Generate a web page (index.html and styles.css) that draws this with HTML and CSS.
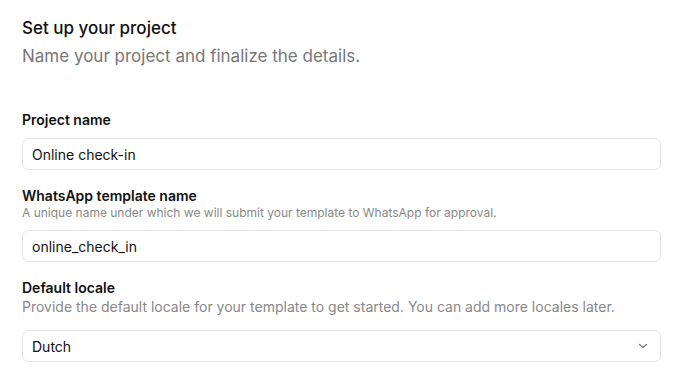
FILE: index.html
```html
<!DOCTYPE html>
<html lang="en">
<head>
  <meta charset="UTF-8">
  <title>Set up your project</title>
  <link rel="stylesheet" href="styles.css">
</head>
<body>
  <div class="page">
    <div class="intro">
      <h1 class="title">Set up your project</h1>
      <p class="subtitle">Name your project and finalize the details.</p>
    </div>

    <form class="form">
      <div class="field">
        <label class="label" for="projectName">Project name</label>
        <input class="input" id="projectName" value="Online check-in" />
      </div>

      <div class="field">
        <label class="label" for="templateName">WhatsApp template name</label>
        <div class="hint hint-small">A unique name under which we will submit your template to WhatsApp for approval.</div>
        <input class="input" id="templateName" value="online_check_in" />
      </div>

      <div class="field">
        <label class="label" for="locale">Default locale</label>
        <div class="hint">Provide the default locale for your template to get started. You can add more locales later.</div>
        <div class="select" id="locale">
          <span>Dutch</span>
          <svg class="chevron" width="10" height="10" viewBox="0 0 10 10">
            <path d="M1.5 3.5 L5 6.5 L8.5 3.5" fill="none" stroke="#777" stroke-width="1.2" stroke-linecap="round" stroke-linejoin="round"/>
          </svg>
        </div>
      </div>
    </form>
  </div>
</body>
</html>
```

FILE: styles.css
```css
body {
  margin: 0;
  padding: 0;
  background: #fff;
  color: #111;
  font-family: Inter, "Liberation Sans", sans-serif;
}
.page {
  padding: 16px 22px;
}
.title {
  margin: 0;
  font-size: 17px;
  line-height: 24px;
  font-weight: 500;
  color: #111;
}
.subtitle {
  margin: 4px 0 0;
  font-size: 17px;
  line-height: 24px;
  color: #777;
}
.form {
  margin-top: 42px;
  display: flex;
  flex-direction: column;
  gap: 16px;
}
.field {
  display: flex;
  flex-direction: column;
}
.label {
  font-size: 14px;
  line-height: 20px;
  font-weight: 600;
  margin-bottom: 8px;
}
.hint {
  font-size: 14px;
  line-height: 18px;
  color: #888;
  margin-top: -8px;
  margin-bottom: 14px;
}
.hint-small {
  font-size: 12px;
  line-height: 16px;
  margin-top: -9px;
  margin-bottom: 9px;
}
.input,
.select {
  box-sizing: border-box;
  height: 32px;
  width: 100%;
  border: 1px solid #e5e5e5;
  border-radius: 6px;
  padding: 0 9px;
  font-family: inherit;
  font-size: 14px;
  color: #111;
  background: #fff;
  outline: none;
}
.select {
  display: flex;
  align-items: center;
  justify-content: space-between;
  padding-right: 12px;
}
```
